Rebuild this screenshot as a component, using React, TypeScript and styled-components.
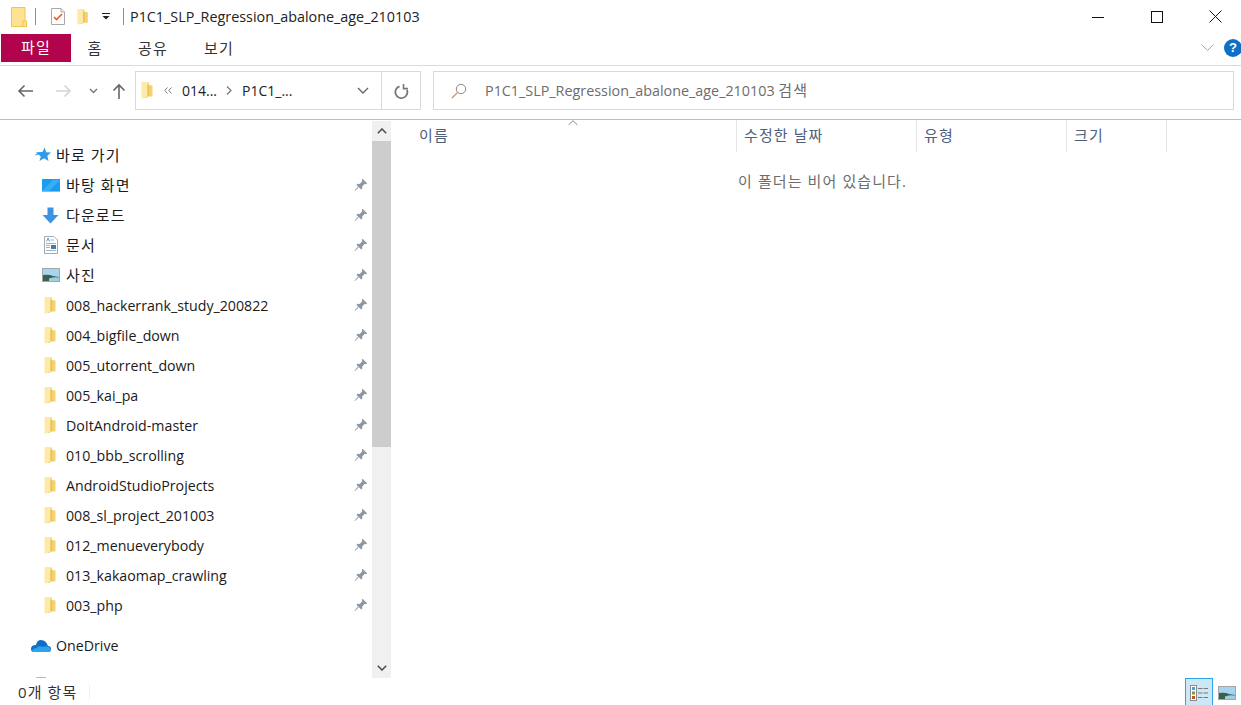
import React from "react";
import styled, { createGlobalStyle } from "styled-components";

const GlobalStyle = createGlobalStyle`
  html, body {
    margin: 0;
    padding: 0;
    background: #fff;
  }
  body {
    font-family: "Open Sans", "Noto Sans CJK KR", sans-serif;
    color: #1a1a1a;
  }
`;

const Window = styled.div`
  width: 1241px;
  height: 705px;
  display: flex;
  flex-direction: column;
  overflow: hidden;
  background: #fff;
`;

// hangul runs are set a bit larger and looser than the latin ones
const Ko = styled.span`
  font-size: 15px;
  letter-spacing: 1.1px;
`;

/* title bar */
const TitleBar = styled.div`
  height: 33px;
  display: flex;
  align-items: center;
  flex: none;
`;
const QuickIcons = styled.div`
  display: flex;
  align-items: center;
  padding-left: 11px;
  width: 130px;
  box-sizing: border-box;
`;
const TitleSep = styled.span<{ $left: number }>`
  width: 1px;
  height: 17px;
  background: #8f8f8f;
  margin-left: ${(p) => p.$left}px;
`;
const QuickIcon = styled.span<{ $left: number }>`
  display: flex;
  margin-left: ${(p) => p.$left}px;
`;
const TitleText = styled.span`
  font-size: 14.35px;
  line-height: 33px;
  color: #222;
  white-space: nowrap;
`;
const WindowButtons = styled.div`
  margin-left: auto;
  margin-right: -4px;
  display: flex;
`;
const WinButton = styled.div`
  width: 59px;
  height: 31px;
  display: flex;
  align-items: center;
  justify-content: center;
`;

/* ribbon tabs */
const RibbonRow = styled.div`
  height: 32px;
  flex: none;
  display: flex;
  align-items: flex-start;
  padding-left: 1px;
  border-bottom: 1px solid #dadada;
  box-sizing: content-box;
`;
const FileTab = styled.div`
  width: 70px;
  height: 28px;
  background: #b2044c;
  color: #fff;
  line-height: 27px;
  text-align: center;
  margin-top: 1px;
`;
const Tab = styled.div<{ $width: number }>`
  width: ${(p) => p.$width}px;
  height: 28px;
  line-height: 29px;
  margin-top: 1px;
  color: #333;
  text-align: center;
`;
const RibbonEnd = styled.div`
  margin-left: auto;
  height: 30px;
  display: flex;
  align-items: center;
  gap: 10px;
`;
const HelpBall = styled.div`
  width: 18px;
  height: 18px;
  margin-right: -1px;
  border-radius: 50%;
  background: #0f6fc6;
  color: #fff;
  font: bold 13px/18px "Liberation Sans", sans-serif;
  text-align: center;
`;

/* address row */
const AddressRow = styled.div`
  height: 54px;
  flex: none;
  display: flex;
  align-items: flex-start;
  border-bottom: 1px solid #bdbdbd;
  box-sizing: border-box;
`;
const NavButtons = styled.div`
  width: 135px;
  height: 39px;
  margin-top: 5px;
  flex: none;
  display: flex;
  align-items: center;
`;
const NavIcon = styled.span<{ $width: number }>`
  width: ${(p) => p.$width}px;
  display: flex;
  justify-content: center;
  flex: none;
`;
const AddressBox = styled.div`
  width: 286px;
  height: 39px;
  margin-top: 5px;
  flex: none;
  display: flex;
  align-items: center;
  border: 1px solid #d9d9d9;
  box-sizing: border-box;
`;
const Crumbs = styled.div`
  width: 246px;
  height: 100%;
  flex: none;
  display: flex;
  align-items: center;
  font-size: 14px;
  color: #222;
  border-right: 1px solid #d9d9d9;
  box-sizing: border-box;
  padding-left: 5px;
`;
const Crumb = styled.span<{ $width: number }>`
  width: ${(p) => p.$width}px;
  flex: none;
  white-space: nowrap;
  display: flex;
  align-items: center;
`;
const Refresh = styled.div`
  flex: 1;
  display: flex;
  justify-content: center;
`;
const SearchBox = styled.div`
  width: 801px;
  height: 39px;
  margin: 5px 0 0 12px;
  flex: none;
  display: flex;
  align-items: center;
  border: 1px solid #d9d9d9;
  box-sizing: border-box;
  padding-left: 17px;
  gap: 18px;
  font-size: 14.35px;
  color: #6d6d6d;
  white-space: pre;
`;
const SearchLabel = styled.span`
  margin-top: -2px;
`;

/* main area */
const Body = styled.div`
  flex: 1;
  min-height: 0;
  display: flex;
`;
const NavPane = styled.div`
  width: 372px;
  flex: none;
  overflow: hidden;
  padding-top: 20px;
  box-sizing: border-box;
`;
const TreeRow = styled.div<{ $indent: number; $gapTop?: number }>`
  height: 30px;
  margin-top: ${(p) => p.$gapTop ?? 0}px;
  display: flex;
  align-items: center;
  padding-left: ${(p) => p.$indent}px;
  font-size: 14.2px;
  color: #1a1a1a;
  white-space: pre;
`;
const TreeLabel = styled(Ko)`
  margin-top: -2px;
`;
const TreeIcon = styled.span<{ $width: number }>`
  width: ${(p) => p.$width}px;
  flex: none;
  display: flex;
  align-items: center;
`;
const PinSlot = styled.span`
  margin-left: auto;
  width: 14px;
  margin-right: 4px;
  display: flex;
`;

const Scrollbar = styled.div`
  width: 19px;
  flex: none;
  margin-top: 1px;
  background: #f0f0f0;
  display: flex;
  flex-direction: column;
`;
const ScrollArrow = styled.div`
  height: 20px;
  flex: none;
  display: flex;
  align-items: center;
  justify-content: center;
`;
const ScrollThumb = styled.div`
  height: 306px;
  flex: none;
  background: #cdcdcd;
`;
const ScrollTrack = styled.div`
  flex: 1;
`;

const Content = styled.div`
  flex: 1;
  min-width: 0;
`;
const ColumnHeaderRow = styled.div`
  height: 32px;
  display: flex;
  padding-left: 20px;
`;
const ColumnHeader = styled.div<{ $width: number; $padding?: number }>`
  width: ${(p) => p.$width}px;
  flex: none;
  box-sizing: border-box;
  padding-left: ${(p) => p.$padding ?? 7}px;
  border-right: 1px solid #e5e5e5;
  line-height: 31px;
  color: #4c607a;
  position: relative;
`;
const SortCaret = styled.span`
  position: absolute;
  left: 157px;
  top: 0;
  display: flex;
`;
const EmptyNote = styled.div`
  padding: 17px 0 0 347px;
  line-height: 24px;
  color: #6d6d6d;
`;

/* status bar */
const StatusBar = styled.div`
  height: 27px;
  flex: none;
  display: flex;
  align-items: center;
  color: #333;
  padding-left: 18px;
`;
const StatusSep = styled.span`
  width: 1px;
  height: 14px;
  background: #eee;
  margin-left: 12px;
`;
const ViewButtons = styled.div`
  margin-left: auto;
  display: flex;
  align-items: center;
  height: 100%;
`;
const ViewButton = styled.div<{ $active?: boolean }>`
  width: 28px;
  height: 27px;
  box-sizing: border-box;
  padding-top: 2px;
  display: flex;
  align-items: center;
  justify-content: center;
  background: ${(p) => (p.$active ? "#cce8f7" : "transparent")};
  border: ${(p) => (p.$active ? "1px solid #2aa4e6" : "none")};
  border-bottom: none;
`;

const FolderIcon = ({ height = 17 }: { height?: number }) => (
  <svg width={(height * 12) / 17} height={height} viewBox="0 0 12 17">
    <path d="M1 0.5 H8 V3 L11.5 3.5 V14.5 H6 V16 H1Z" fill="#f6d26c" />
    <path d="M0.5 0.5 H6.5 V14.5 L2 16.5 H0.5Z" fill="#fdeaa9" />
    <path d="M6.5 3 H8 V14.5 H6.5Z" fill="#e8c05a" />
  </svg>
);

const Pin = () => (
  <svg width="14" height="14" viewBox="0 0 14 14">
    <path
      d="M8.6 0.8 L13.2 5.4 L12 6.2 L10.8 5.8 L8.2 8.4 L8.3 10.6 L7.2 11.6 L2.5 6.9 L3.5 5.8 L5.7 5.9 L8.3 3.3 L7.8 2Z"
      fill="#8b97a3"
    />
    <path d="M4.6 9.4 L1 13 L0.6 12.6 L3.9 8.8Z" fill="#8b97a3" />
  </svg>
);

const PhotoIcon = ({ width = 18 }: { width?: number }) => (
  <svg width={width} height="14" viewBox="0 0 18 14">
    <rect x="0.5" y="0.5" width="17" height="13" fill="#a9d4f0" stroke="#a5a5a5" />
    <path d="M1 7 Q7 6 11 8 L17 9 V13 H1Z" fill="#3a5f4c" />
    <path d="M7 10.5 Q12 8.5 17 9.5 V13 H7Z" fill="#9fcde2" />
  </svg>
);

const folders = [
  "008_hackerrank_study_200822",
  "004_bigfile_down",
  "005_utorrent_down",
  "005_kai_pa",
  "DoItAndroid-master",
  "010_bbb_scrolling",
  "AndroidStudioProjects",
  "008_sl_project_201003",
  "012_menueverybody",
  "013_kakaomap_crawling",
  "003_php",
];

const specialRows: { label: string; icon: React.ReactNode }[] = [
  {
    label: "바탕 화면",
    icon: (
      <svg width="18" height="13" viewBox="0 0 18 13">
        <rect width="18" height="13" fill="#1a9df0" />
        <path d="M0 12 L11 1 H18 L7 12Z" fill="#39aef5" />
        <rect y="12" width="18" height="1" fill="#7fbfe8" />
      </svg>
    ),
  },
  {
    label: "다운로드",
    icon: (
      <svg width="17" height="17" viewBox="0 0 17 17">
        <path d="M5.5 0.5 H11.5 V8 H16.5 L8.5 16.5 L0.5 8 H5.5Z" fill="#3d93e0" />
      </svg>
    ),
  },
  {
    label: "문서",
    icon: (
      <svg width="14" height="18" viewBox="0 0 14 18" style={{ marginLeft: 2 }}>
        <path d="M0.5 0.5 H10 L13.5 4 V17.5 H0.5Z" fill="#fff" stroke="#a9a9a9" />
        <path d="M2.5 5.5 L4 2 L5.5 5.5" fill="none" stroke="#4f9ddc" />
        <path d="M6.5 4 H10 M2 7.5 H12 M2 14.5 H12 M2 9.5 H6 M2 11.5 H6" stroke="#9db4c6" />
        <rect x="7" y="9" width="5" height="4" fill="#4d7a9c" />
      </svg>
    ),
  },
  {
    label: "사진",
    icon: <PhotoIcon />,
  },
];

export default function App() {
  return (
    <Window>
      <GlobalStyle />
      <TitleBar>
        <QuickIcons>
          <svg width="16" height="20" viewBox="0 0 16 20">
            <path d="M0.5 0.5 H14 V19.5 H0.5Z" fill="#fde391" stroke="#efc650" />
            <rect x="12" y="14" width="3.5" height="5.5" fill="#fde391" stroke="#efc650" />
          </svg>
          <TitleSep $left={8} />
          <QuickIcon $left={15}>
            <svg width="14" height="17" viewBox="0 0 14 17">
              <path d="M0.5 0.5 H10 L13.5 4 V16.5 H0.5Z" fill="#fff" stroke="#a9a9a9" />
              <path d="M10 0.5 V4 H13.5" fill="#eee" stroke="#a9a9a9" />
              <path d="M3 9 L5.5 11.5 L11 6" fill="none" stroke="#e8592b" strokeWidth="1.6" />
            </svg>
          </QuickIcon>
          <QuickIcon $left={12}>
            <FolderIcon height={16} />
          </QuickIcon>
          <QuickIcon $left={14}>
            <svg width="8" height="7" viewBox="0 0 8 7">
              <rect y="0" width="8" height="1" fill="#222" />
              <path d="M0.5 3 H7.5 L4 6.5Z" fill="#222" />
            </svg>
          </QuickIcon>
          <TitleSep $left={13} />
        </QuickIcons>
        <TitleText>P1C1_SLP_Regression_abalone_age_210103</TitleText>
        <WindowButtons>
          <WinButton>
            <svg width="12" height="12" viewBox="0 0 12 12">
              <path d="M0 6.5 H12" stroke="#111" />
            </svg>
          </WinButton>
          <WinButton>
            <svg width="12" height="12" viewBox="0 0 12 12">
              <rect x="0.5" y="0.5" width="11" height="11" fill="none" stroke="#111" />
            </svg>
          </WinButton>
          <WinButton>
            <svg width="13" height="13" viewBox="0 0 13 13">
              <path d="M0.5 0.5 L12.5 12.5 M12.5 0.5 L0.5 12.5" stroke="#111" />
            </svg>
          </WinButton>
        </WindowButtons>
      </TitleBar>

      <RibbonRow>
        <FileTab>
          <Ko>파일</Ko>
        </FileTab>
        <Tab $width={48}>
          <Ko>홈</Ko>
        </Tab>
        <Tab $width={68}>
          <Ko>공유</Ko>
        </Tab>
        <Tab $width={64}>
          <Ko>보기</Ko>
        </Tab>
        <RibbonEnd>
          <svg width="13" height="8" viewBox="0 0 13 8">
            <path d="M0.5 0.5 L6.5 6.5 L12.5 0.5" fill="none" stroke="#a8a8a8" />
          </svg>
          <HelpBall>?</HelpBall>
        </RibbonEnd>
      </RibbonRow>

      <AddressRow>
        <NavButtons>
          <NavIcon $width={49}>
            <svg width="16" height="14" viewBox="0 0 16 14">
              <path d="M16 7 H2 M7.5 1.5 L2 7 L7.5 12.5" fill="none" stroke="#666" strokeWidth="1.6" />
            </svg>
          </NavIcon>
          <NavIcon $width={30}>
            <svg width="16" height="14" viewBox="0 0 16 14">
              <path d="M0 7 H14 M8.5 1.5 L14 7 L8.5 12.5" fill="none" stroke="#d4d4d4" strokeWidth="1.6" />
            </svg>
          </NavIcon>
          <NavIcon $width={29}>
            <svg width="9" height="6" viewBox="0 0 9 6">
              <path d="M1 1 L4.5 4.5 L8 1" fill="none" stroke="#777" strokeWidth="1.4" />
            </svg>
          </NavIcon>
          <NavIcon $width={22}>
            <svg width="14" height="16" viewBox="0 0 14 16">
              <path d="M7 16 V2 M1.5 7.5 L7 2 L12.5 7.5" fill="none" stroke="#666" strokeWidth="1.6" />
            </svg>
          </NavIcon>
        </NavButtons>
        <AddressBox>
          <Crumbs>
            <Crumb $width={23}>
              <FolderIcon />
            </Crumb>
            <Crumb $width={18}>
              <svg width="8" height="7" viewBox="0 0 8 7">
                <path d="M3.5 0.5 L0.7 3.5 L3.5 6.5 M7.5 0.5 L4.7 3.5 L7.5 6.5" fill="none" stroke="#777" />
              </svg>
            </Crumb>
            <Crumb $width={44}>014...</Crumb>
            <Crumb $width={16}>
              <svg width="6" height="9" viewBox="0 0 6 9">
                <path d="M1 0.5 L5 4.5 L1 8.5" fill="none" stroke="#777" strokeWidth="1.2" />
              </svg>
            </Crumb>
            <Crumb $width={115}>P1C1_...</Crumb>
            <Crumb $width={14}>
              <svg width="12" height="7" viewBox="0 0 12 7">
                <path d="M1 1 L6 6 L11 1" fill="none" stroke="#666" strokeWidth="1.4" />
              </svg>
            </Crumb>
          </Crumbs>
          <Refresh>
            <svg width="15" height="16" viewBox="0 0 15 16">
              <path d="M5.5 3.4 A6 6 0 1 0 13 7" fill="none" stroke="#777" strokeWidth="1.8" />
              <path d="M9.5 1 V5.6 H14" fill="none" stroke="#777" strokeWidth="1.6" />
            </svg>
          </Refresh>
        </AddressBox>
        <SearchBox>
          <svg width="16" height="16" viewBox="0 0 16 16">
            <circle cx="10" cy="6" r="4.7" fill="none" stroke="#888" />
            <path d="M6.6 9.4 L1 15" stroke="#d08a5a" strokeWidth="1.2" />
          </svg>
          <SearchLabel>
            P1C1_SLP_Regression_abalone_age_210103 <Ko>검색</Ko>
          </SearchLabel>
        </SearchBox>
      </AddressRow>

      <Body>
        <NavPane>
          <TreeRow $indent={34}>
            <TreeIcon $width={22}>
              <svg width="17" height="16" viewBox="0 0 17 16">
                <path d="M10.5 0.5 L12.2 5.2 L17 5.6 L13.3 8.8 L14.5 14 L10 11.2 L5.5 14 L6.8 9.4 L4.5 7.6 L0.5 8.5 L3.5 6 L1.5 5.2 L8.5 5Z" fill="#2f9be8" />
              </svg>
            </TreeIcon>
            <TreeLabel>바로 가기</TreeLabel>
          </TreeRow>
          {specialRows.map((row) => (
            <TreeRow key={row.label} $indent={42}>
              <TreeIcon $width={24}>{row.icon}</TreeIcon>
              <TreeLabel>{row.label}</TreeLabel>
              <PinSlot>
                <Pin />
              </PinSlot>
            </TreeRow>
          ))}
          {folders.map((name) => (
            <TreeRow key={name} $indent={44}>
              <TreeIcon $width={22}>
                <FolderIcon />
              </TreeIcon>
              {name}
              <PinSlot>
                <Pin />
              </PinSlot>
            </TreeRow>
          ))}
          <TreeRow $indent={31} $gapTop={10}>
            <TreeIcon $width={25}>
              <svg width="20" height="13" viewBox="0 0 20 13">
                <path d="M3 13 H17 Q20 13 20 10 Q20 7 17 7 Q15 1 10 1 Q6 1 5 6 Q0 6 0 10 Q0 13 3 13Z" fill="#0f6fc6" />
                <path d="M3 13 H17 Q20 13 20 10 Q17 6 12 8 Q8 6 5 9 Q2 9 1 11.5 Q1.6 13 3 13Z" fill="#2ea3ec" />
              </svg>
            </TreeIcon>
            OneDrive
          </TreeRow>
          <TreeRow $indent={31} $gapTop={10}>
            <TreeIcon $width={25}>
              <svg width="20" height="16" viewBox="0 0 20 16">
                <rect x="5" y="0" width="10" height="12" fill="#8ec8ef" />
              </svg>
            </TreeIcon>
          </TreeRow>
        </NavPane>
        <Scrollbar>
          <ScrollArrow>
            <svg width="10" height="6" viewBox="0 0 10 6">
              <path d="M0.8 5.2 L5 1 L9.2 5.2" fill="none" stroke="#505050" strokeWidth="1.6" />
            </svg>
          </ScrollArrow>
          <ScrollThumb />
          <ScrollTrack />
          <ScrollArrow>
            <svg width="10" height="6" viewBox="0 0 10 6">
              <path d="M0.8 0.8 L5 5 L9.2 0.8" fill="none" stroke="#505050" strokeWidth="1.6" />
            </svg>
          </ScrollArrow>
        </Scrollbar>
        <Content>
          <ColumnHeaderRow>
            <ColumnHeader $width={326} $padding={8}>
              <SortCaret>
                <svg width="10" height="6" viewBox="0 0 10 6">
                  <path d="M0.5 5 L5 0.7 L9.5 5" fill="none" stroke="#8a8a8a" />
                </svg>
              </SortCaret>
              <Ko>이름</Ko>
            </ColumnHeader>
            <ColumnHeader $width={180}>
              <Ko>수정한 날짜</Ko>
            </ColumnHeader>
            <ColumnHeader $width={150}>
              <Ko>유형</Ko>
            </ColumnHeader>
            <ColumnHeader $width={100}>
              <Ko>크기</Ko>
            </ColumnHeader>
          </ColumnHeaderRow>
          <EmptyNote>
            <Ko>이 폴더는 비어 있습니다.</Ko>
          </EmptyNote>
        </Content>
      </Body>

      <StatusBar>
        <Ko>0개 항목</Ko>
        <StatusSep />
        <ViewButtons>
          <ViewButton $active>
            <svg width="18" height="16" viewBox="0 0 18 16">
              <rect x="0.5" y="0.5" width="6" height="15" fill="#fff" stroke="#8a8a8a" />
              <rect x="2" y="2" width="3" height="3" fill="#4f9ddc" />
              <rect x="2" y="6.5" width="3" height="3" fill="#7a9a3c" />
              <rect x="2" y="11" width="3" height="3" fill="#c0562a" />
              <path d="M8 3.5 H12.5 M13.5 3.5 H18 M8 8 H12.5 M13.5 8 H18 M8 12.5 H12.5 M13.5 12.5 H18" stroke="#777" />
            </svg>
          </ViewButton>
          <ViewButton>
            <PhotoIcon />
          </ViewButton>
        </ViewButtons>
      </StatusBar>
    </Window>
  );
}
